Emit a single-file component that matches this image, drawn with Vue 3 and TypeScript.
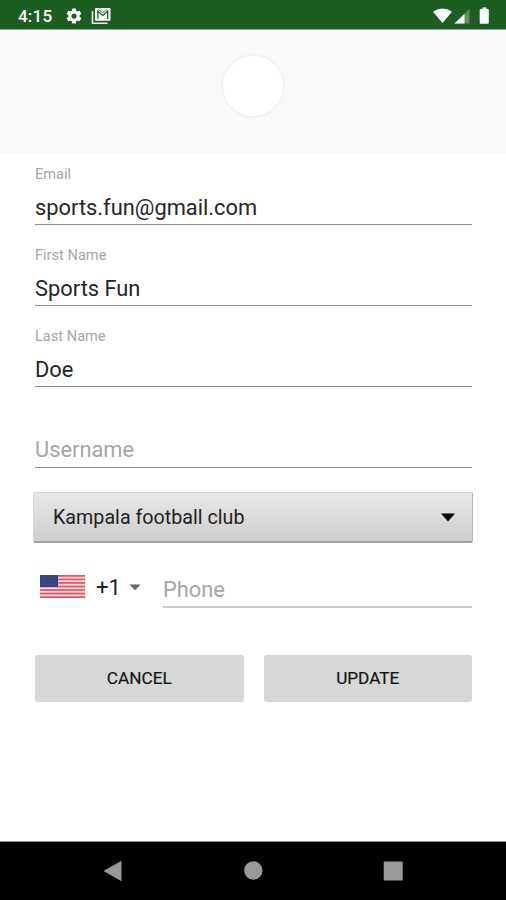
<script setup lang="ts">
import { ref } from 'vue'

interface Field {
  id: string
  label: string
  value: string
}

const fields = ref<Field[]>([
  { id: 'email', label: 'Email', value: 'sports.fun@gmail.com' },
  { id: 'first', label: 'First Name', value: 'Sports Fun' },
  { id: 'last', label: 'Last Name', value: 'Doe' },
])
const username = ref('')
const phone = ref('')
const club = ref('Kampala football club')
const stripes = [0, 1, 2, 3, 4, 5, 6]
</script>

<template>
  <div class="screen">
    <header class="status">
      <span class="time">4:15</span>
      <svg class="gear" viewBox="0 0 24 24" width="18" height="18">
        <path fill="#fff" fill-rule="evenodd" d="M19.4 13a7.800 7.800 0 0 0 0-2l2.100-1.650a.5.5 0 0 0 .12-.64l-2-3.460a.5.5 0 0 0-.61-.22l-2.490 1a7.300 7.300 0 0 0-1.690-.98l-.38-2.650A.5.5 0 0 0 14 2h-4a.5.5 0 0 0-.49.42l-.38 2.650c-.61.25-1.170.59-1.690.98l-2.490-1a.5.5 0 0 0-.61.22l-2 3.460a.5.5 0 0 0 .12.64L4.570 11a7.900 7.900 0 0 0 0 2l-2.110 1.650a.5.5 0 0 0-.12.64l2 3.460c.12.22.39.3.61.22l2.490-1c.52.4 1.080.73 1.690.98l.38 2.650c.03.24.24.4.49.4h4c.25 0 .46-.18.49-.42l.38-2.650c.61-.25 1.170-.59 1.690-.98l2.490 1c.23.09.49 0 .61-.22l2-3.460a.5.5 0 0 0-.12-.64zM12 15.500a3.500 3.500 0 1 1 0-7 3.500 3.500 0 0 1 0 7z" />
      </svg>
      <svg class="mail" viewBox="0 0 20 18" width="20" height="18">
        <path d="M1.500 4v12.300h15" fill="none" stroke="#e4eee5" stroke-width="1.600" />
        <rect x="4" y="1" width="15.500" height="12.800" rx="1.200" fill="#fff" />
        <path d="M6.900 12V4.200l4.900 4.300 4.900-4.300V12" fill="none" stroke="#1b5e20" stroke-width="1.300" />
        <path d="M7.500 2.700l4.300 3 4.300-3" fill="none" stroke="#1b5e20" stroke-width=".7" />
      </svg>
      <svg class="signals" viewBox="0 0 60 20" width="60" height="20">
        <path d="M0 5.800Q9.500-.8 19 5.800L9.500 17z" fill="#fff" />
        <path d="M36.500 2.800V17.500H21.500z" fill="#5f8f63" />
        <path d="M31.500 8V17.500H21.500z" fill="#fff" />
        <path d="M47.500 3h2V1.500h4V3h1.500q.8 0 .8.800v13.200q0 .8-.8.800h-7.500q-.8 0-.8-.8V3.800q0-.8.800-.8z" fill="#fff" />
      </svg>
    </header>

    <section class="banner"><div class="avatar"></div></section>

    <main class="form">
      <div v-for="f in fields" :key="f.id" class="field">
        <label :for="f.id">{{ f.label }}</label>
        <input :id="f.id" v-model="f.value" class="entry" type="text" />
      </div>
      <div class="field">
        <input v-model="username" class="entry lone" type="text" placeholder="Username" />
      </div>

      <div class="club">
        <span>{{ club }}</span>
        <svg viewBox="0 0 16 9" width="16" height="9"><path d="M1 .5h14L8 8.500z" fill="#000" /></svg>
      </div>

      <div class="phone-row">
        <svg class="flag" viewBox="0 0 45 23" width="45" height="23">
          <rect width="45" height="23" fill="#f9dcdd" />
          <rect v-for="s in stripes" :key="s" x="0" :y="s * 3.540" width="45" height="1.770" fill="#df5a66" />
          <rect width="18" height="12" fill="#34447f" />
          <path d="M2 2.500h15M2 6h15M2 9.500h15" stroke="#52609a" stroke-width=".8" stroke-dasharray="1 2" />
        </svg>
        <span class="code">+1</span>
        <svg class="caret" viewBox="0 0 12 7" width="12" height="7"><path d="M.5.500h11L6 6.200z" fill="#666" /></svg>
        <input v-model="phone" class="entry phone" type="tel" placeholder="Phone" />
      </div>

      <div class="actions">
        <button type="button">CANCEL</button>
        <button type="button">UPDATE</button>
      </div>
    </main>

    <nav class="nav">
      <svg viewBox="0 0 20 22" width="20" height="22"><path d="M.5 11L18.500.7V21.300z" fill="#999" /></svg>
      <svg viewBox="0 0 20 20" width="20" height="20"><circle cx="10.300" cy="9.500" r="9.200" fill="#999" /></svg>
      <svg viewBox="0 0 20 20" width="20" height="20"><rect x=".7" y=".5" width="19" height="19" rx="1" fill="#999" /></svg>
    </nav>
  </div>
</template>

<style>
body {
  margin: 0;
  background: #fff;
}
</style>

<style scoped>
.screen {
  width: 506px;
  height: 900px;
  display: flex;
  flex-direction: column;
  overflow: hidden;
  background: #fff;
  font-family: Roboto, "Liberation Sans", sans-serif;
  color: #222;
}
svg {
  display: block;
  flex: none;
}
.status {
  flex: none;
  box-sizing: border-box;
  height: 30px;
  display: flex;
  align-items: center;
  padding: 2px 14px 0 18px;
  background: #1b5e20;
  border-bottom: 1px solid #8daf90;
}
.time {
  width: 47px;
  color: #fff;
  font-size: 17px;
  font-weight: 500;
  letter-spacing: 0.2px;
}
.mail {
  margin-left: 8px;
}
.signals {
  margin-left: auto;
  margin-right: -1px;
}
.banner {
  flex: none;
  box-sizing: border-box;
  height: 124px;
  padding-top: 24px;
  background: #fafafa;
  border-bottom: 1px solid #f5f5f5;
}
.avatar {
  box-sizing: border-box;
  width: 64px;
  height: 64px;
  margin: 0 auto;
  border: 2px solid #f3f3f3;
  border-radius: 50%;
  background: #fff;
}
.form {
  flex: 1;
  display: flex;
  flex-direction: column;
  padding: 0 34px 0 35px;
}
.field {
  flex: none;
  height: 81px;
  display: flex;
  flex-direction: column;
}
.field label {
  height: 18px;
  margin-top: 11px;
  line-height: 18px;
  font-size: 14.600px;
  color: #a6a6a6;
}
.entry {
  box-sizing: border-box;
  width: 100%;
  height: 42px;
  padding: 7px 0 0;
  border: 0;
  border-bottom: 1px solid #8c8c8c;
  border-radius: 0;
  outline: 0;
  background: none;
  font-family: inherit;
  font-size: 21.850px;
  color: #262626;
}
.entry::placeholder {
  color: #a6a6a6;
  opacity: 1;
}
.entry.lone {
  margin-top: 29px;
  padding: 6px 0 1px;
}
.club {
  flex: none;
  box-sizing: border-box;
  height: 51px;
  margin: 14px -1px 0 -2px;
  padding: 1px 16px 0 19px;
  display: flex;
  align-items: center;
  justify-content: space-between;
  border: 1px solid #d8d8d8;
  border-right-color: #b4b4b4;
  border-bottom: 2px solid #a0a0a0;
  border-radius: 2px;
  background: linear-gradient(#e8e8e8, #cecece);
  font-size: 19.700px;
}
.phone-row {
  flex: none;
  height: 65px;
  display: flex;
  align-items: center;
  padding-left: 5px;
}
.flag {
  margin-top: 22px;
}
.code {
  width: 34px;
  margin: 23px 0 0 11px;
  font-size: 22px;
}
.caret {
  margin: 23px 22px 0 -1px;
}
.phone {
  flex: 1;
  min-width: 0;
  margin-top: 23px;
  border-bottom: 2px solid #cacaca;
}
.actions {
  display: flex;
  gap: 20px;
  margin-top: 47px;
}
.actions button {
  flex: 1;
  height: 47px;
  padding: 0 0 2px;
  border: 0;
  border-radius: 3px;
  background: #d6d7d7;
  color: #141414;
  font-family: inherit;
  font-size: 17.200px;
  font-weight: 400;
  -webkit-text-stroke: 0.2px #141414;
}
.nav {
  flex: none;
  box-sizing: border-box;
  height: 59px;
  display: flex;
  align-items: center;
  justify-content: space-between;
  padding: 0 103px;
  background: #000;
  border-top: 1px solid #999;
}
</style>
